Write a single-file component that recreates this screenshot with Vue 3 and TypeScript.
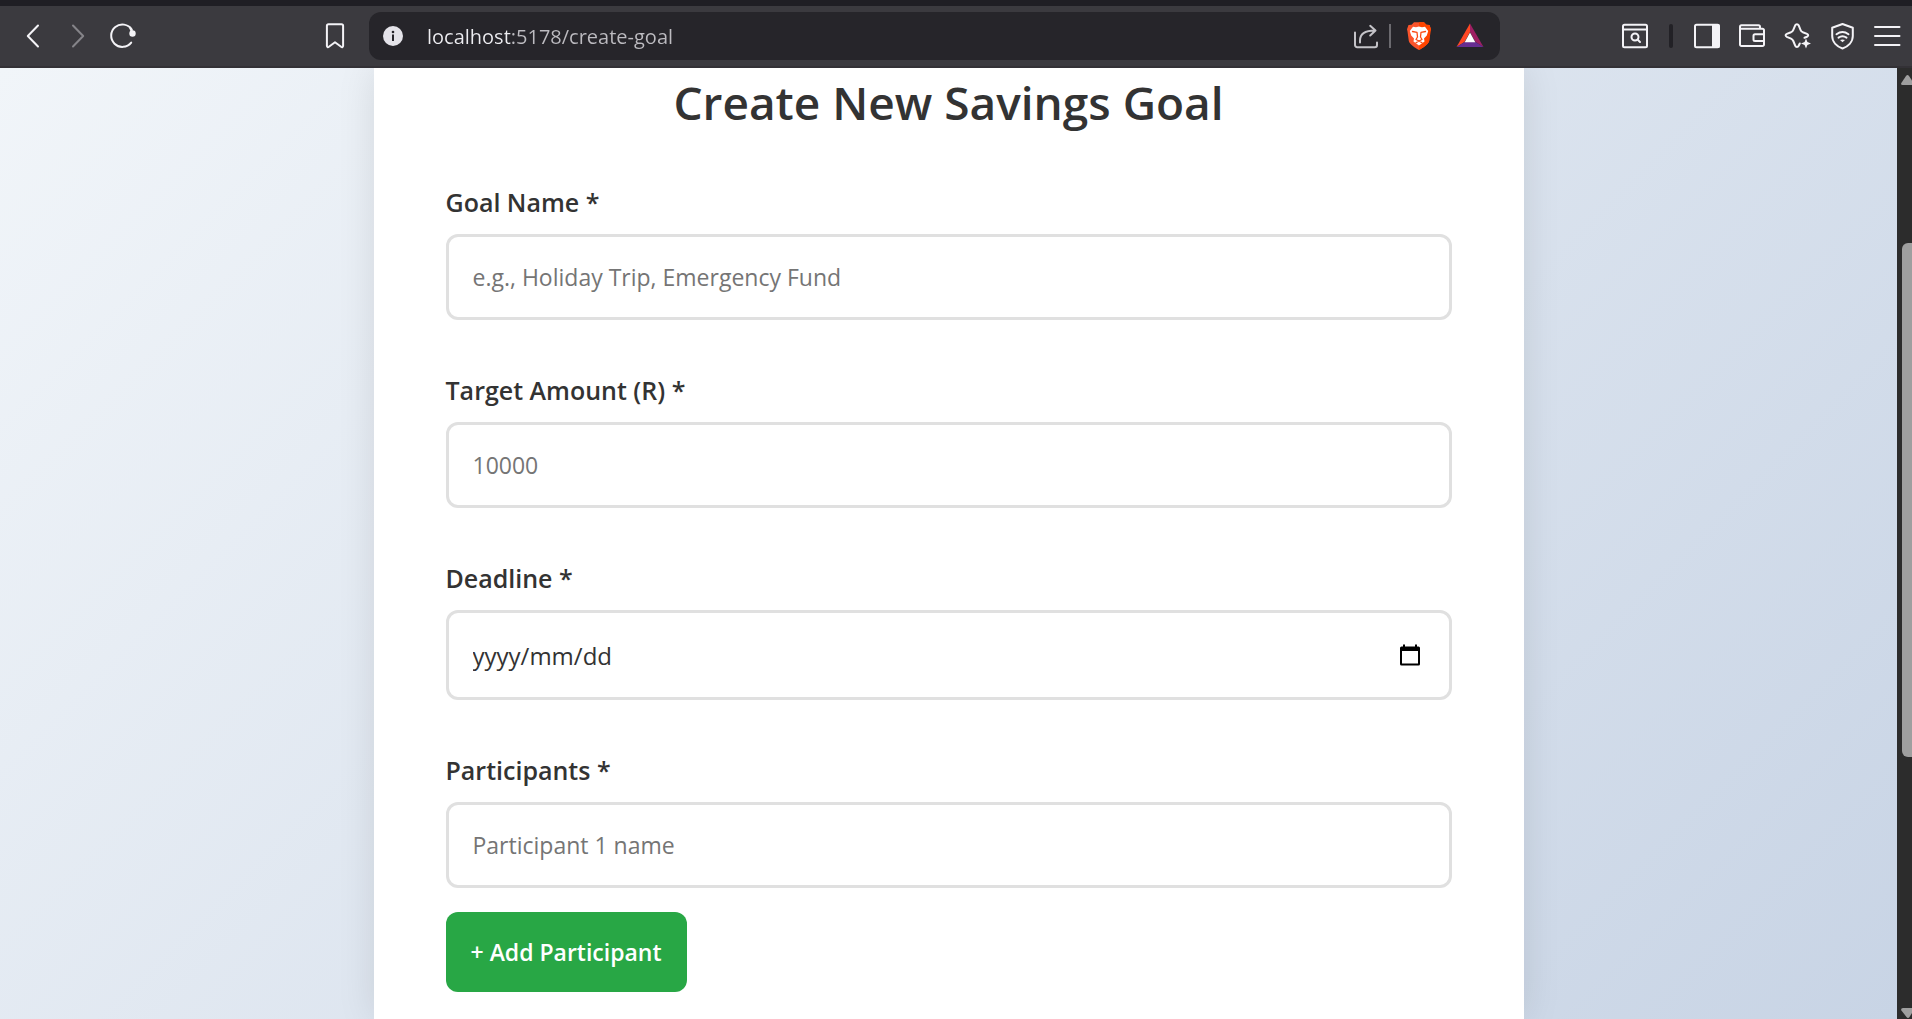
<script setup lang="ts">
import { ref } from 'vue'

const address = ref('localhost:5178/create-goal')
const goalName = ref('')
const targetAmount = ref('')
const deadline = ref('')
const participants = ref<string[]>([''])

function addParticipant(): void {
  participants.value.push('')
}
</script>

<template>
  <div class="browser">
    <header class="toolbar">
      <nav class="group" aria-label="Navigation">
        <button class="tool" type="button" aria-label="Back">
          <svg viewBox="0 0 32 32"><path d="M21 5.500L10.800 16L21 26.500" /></svg>
        </button>
        <button class="tool dim" type="button" aria-label="Forward">
          <svg viewBox="0 0 32 32"><path d="M11 5.500L21.200 16L11 26.500" /></svg>
        </button>
        <button class="tool" type="button" aria-label="Reload">
          <svg viewBox="0 0 32 32">
            <path d="M24.200 22.600A11.200 11.200 0 1 1 24.800 9.600" />
            <circle class="solid" cx="25.500" cy="13.500" r="3.200" />
            <path d="M23 7.500L25.500 13" />
          </svg>
        </button>
      </nav>
      <button class="tool bookmark" type="button" aria-label="Bookmark">
        <svg viewBox="0 0 32 32">
          <path d="M9.500 4.200h13a1.600 1.600 0 0 1 1.600 1.600v20c0 1.300-1 1.700-2 1l-6.100-4.500l-6.100 4.500c-1 .700-2 .300-2-1v-20a1.600 1.600 0 0 1 1.600-1.600z" />
        </svg>
      </button>
      <div class="address">
        <svg class="info" viewBox="0 0 32 32" aria-hidden="true">
          <circle cx="16" cy="16" r="10" fill="#e4e3e9" />
          <circle cx="16" cy="12" r="1.300" fill="#26252a" />
          <rect x="15" y="14.500" width="2" height="6.500" fill="#26252a" />
        </svg>
        <input v-model="address" class="url" type="text" aria-label="Address" />
        <button class="tool share" type="button" aria-label="Share">
          <svg viewBox="0 0 32 32">
            <path d="M5 12.500V25a2.200 2.200 0 0 0 2.200 2.200H24.800a2.200 2.200 0 0 0 2.200-2.200V22.500" />
            <path d="M10 22.500V20.500C10 14 14.500 10.500 25 10.500M20.200 5.800L25.500 10.500L20.200 15.500" />
          </svg>
        </button>
        <span class="rule light"></span>
        <button class="tool brave" type="button" aria-label="Brave Shields">
          <svg class="art" viewBox="0 0 32 32">
            <path fill="#fb542b" d="M11 2.200H21L23.400 4.800L26.500 5L28 9.300L27 11.500L26.200 21C25.500 24.500 19.500 28 16 30C12.500 28 6.500 24.500 5.800 21L4.500 11.500L4 9.300L5.500 5L8.600 4.800Z" />
            <path fill="#ff4500" d="M16 2.200H21L23.400 4.800L26.500 5L28 9.300L26.200 21C25.500 24.500 19.500 28 16 30Z" />
            <path fill="#fff" d="M10 6.800L13 7.200L16 6.500L19 7.200L22 6.800L25.200 11L23.800 15.500L21 18.500L21.500 21.500L16 25.500L10.500 21.500L11 18.500L8.200 15.500L6.800 11Z" />
            <path fill="none" stroke="#fb4a14" stroke-width="1.300" d="M9.500 11.500L14 12.300L14.500 17L13 19.500L16 21L19 19.500L17.500 17L18 12.300L22.500 11.500M13 22.800L16 21L19 22.800" />
          </svg>
        </button>
        <button class="tool rewards" type="button" aria-label="Brave Rewards">
          <svg class="art" viewBox="0 0 32 32">
            <path fill="#ff4724" d="M16 3.500V12L10.500 22L2.500 27Z" />
            <path fill="#9e1f63" d="M16 3.500V12L21.500 22L29.500 27Z" />
            <path fill="#662d91" d="M2.500 27L10.500 22H21.500L29.500 27Z" />
            <path fill="#fff" d="M16 12.500L21.300 22.300H10.700Z" />
          </svg>
        </button>
      </div>
      <div class="group end">
        <button class="tool" type="button" aria-label="Search tabs">
          <svg viewBox="0 0 32 32">
            <rect x="4" y="4.800" width="24" height="22.400" rx="1.500" />
            <path d="M4 9.500H28" />
            <circle cx="16" cy="17" r="3.500" />
            <path d="M18.500 19.500L21 22" />
          </svg>
        </button>
        <span class="rule dark"></span>
        <button class="tool" type="button" aria-label="Sidebar">
          <svg viewBox="0 0 32 32">
            <rect x="4" y="4.800" width="24" height="22.400" rx="1.500" />
            <rect class="solid" x="21" y="4.500" width="7.500" height="23" />
          </svg>
        </button>
        <button class="tool" type="button" aria-label="Wallet">
          <svg viewBox="0 0 32 32">
            <path d="M24 8.500V6.800a1.500 1.500 0 0 0-1.500-1.500H5.500A1.500 1.500 0 0 0 4 6.800V24.600A1.500 1.500 0 0 0 5.500 26.100H26.500A1.500 1.500 0 0 0 28 24.600V10.300A1.500 1.500 0 0 0 26.500 8.800H4.500" />
            <path d="M28 14.300H19A1.500 1.500 0 0 0 17.500 15.800V19.500A1.500 1.500 0 0 0 19 21H28" />
          </svg>
        </button>
        <button class="tool" type="button" aria-label="Leo AI">
          <svg viewBox="0 0 32 32">
            <path d="M18.800 23.500L17.700 25.800C16.900 27.300 14.900 27.300 14.300 25.800L12.300 21Q11.600 19.300 10 18.600L5.800 16.800C4.200 16 4.200 14.600 5.800 13.900L10 12.200Q11.600 11.500 12.300 9.800L14.300 5.200C14.900 3.800 16.900 3.800 17.600 5.200L19.500 9.800Q20.200 11.500 21.800 12.200L26 13.900C27.600 14.600 27.600 16 26 16.800L23.500 17.800" />
            <path class="solid" d="M25 18.500L26.400 22.100L30 23.500L26.400 24.900L25 28.500L23.600 24.900L20 23.500L23.600 22.100Z" />
          </svg>
        </button>
        <button class="tool" type="button" aria-label="VPN">
          <svg viewBox="0 0 32 32">
            <path d="M16.500 4L26.800 7.800V16C26.800 22 22 26.500 16.500 28.500C11 26.500 6.200 22 6.200 16V7.800Z" />
            <path d="M10.500 14.200Q16.500 10 22.500 14.200M12.500 17.700Q16.500 15 20.500 17.700" />
            <path class="solid" d="M14 20Q16.500 18.800 19 20L16.500 22.300Z" />
          </svg>
        </button>
        <button class="tool" type="button" aria-label="Menu">
          <svg viewBox="0 0 32 32"><path d="M4 7H28.500M4 16H28.500M4 25H28.500" /></svg>
        </button>
      </div>
    </header>

    <div class="viewport">
      <main class="page">
        <form class="card" @submit.prevent>
          <h1>Create New Savings Goal</h1>

          <div class="field">
            <label for="goal-name">Goal Name *</label>
            <input id="goal-name" v-model="goalName" class="control" type="text" placeholder="e.g., Holiday Trip, Emergency Fund" />
          </div>

          <div class="field">
            <label for="target-amount">Target Amount (R) *</label>
            <input id="target-amount" v-model="targetAmount" class="control" type="number" placeholder="10000" />
          </div>

          <div class="field">
            <label for="deadline">Deadline *</label>
            <div class="control date">
              <input id="deadline" v-model="deadline" type="text" placeholder="yyyy/mm/dd" />
              <button class="picker" type="button" aria-label="Show date picker">
                <svg viewBox="0 0 24 24">
                  <path fill="#000" fill-rule="evenodd" d="M5 1.500H7V3.500H17V1.500H19V3.500H20.500A1.500 1.500 0 0 1 22 5V21A1.500 1.500 0 0 1 20.500 22.500H3.500A1.500 1.500 0 0 1 2 21V5A1.500 1.500 0 0 1 3.500 3.500H5ZM4 8V20.500H20V8Z" />
                </svg>
              </button>
            </div>
          </div>

          <div class="field">
            <label for="participant-1">Participants *</label>
            <input
              v-for="(_, i) in participants"
              :id="`participant-${i + 1}`"
              :key="i"
              v-model="participants[i]"
              class="control"
              type="text"
              :placeholder="`Participant ${i + 1} name`"
            />
            <button class="add" type="button" @click="addParticipant">+ Add Participant</button>
          </div>
        </form>
      </main>
      <div class="scrollbar" aria-hidden="true">
        <svg viewBox="0 0 15 20"><path d="M4 15.500L9 8Q10.500 6 12 8L17 15.500Q17 17 15 17H5.500Q4 17 4 15.500Z" /></svg>
        <div class="track"><div class="thumb"></div></div>
        <svg viewBox="0 0 15 20"><path d="M4 11Q4 9 6 9H16Q17 9 17 11L12.500 18Q11 20 9.500 18Z" /></svg>
      </div>
    </div>
  </div>
</template>

<style>
body {
  margin: 0;
  overflow: hidden;
}
</style>

<style scoped>
* {
  box-sizing: border-box;
}

.browser {
  display: flex;
  flex-direction: column;
  height: 100vh;
  font-family: "Segoe UI", "Open Sans", "Noto Sans", sans-serif;
  color: #333;
}

button,
input {
  font-family: inherit;
  margin: 0;
}

.toolbar {
  display: flex;
  flex: none;
  align-items: center;
  padding: 6px 9px 6px 17px;
  border-top: 6px solid #1f1e24;
  border-bottom: 2px solid #333136;
  background: #3b3a3f;
}

.group {
  display: flex;
  align-items: center;
  gap: 13px;
}

.group.end {
  margin-left: 119px;
}

.tool {
  flex: none;
  width: 32px;
  height: 32px;
  padding: 0;
  border: 0;
  background: none;
  color: #f4f3f7;
}

.tool svg {
  display: block;
  width: 32px;
  height: 32px;
  fill: none;
  stroke: currentColor;
  stroke-width: 2;
  stroke-linecap: round;
  stroke-linejoin: round;
}

.tool .solid {
  fill: currentColor;
  stroke: none;
}

.tool svg.art {
  stroke: none;
}

.tool.dim {
  color: #858489;
}

.bookmark {
  margin: 0 18px 0 180px;
}

.address {
  display: flex;
  flex: 1;
  align-items: center;
  min-width: 0;
  height: 48px;
  padding: 0 14px 0 8px;
  border-radius: 12px;
  background: #26252a;
}

.info {
  flex: none;
  width: 32px;
  height: 32px;
}

.url {
  flex: 1;
  min-width: 0;
  height: 32px;
  margin-left: 18px;
  padding: 0;
  border: 0;
  color: #c4c3c8;
  font-size: 20px;
  background: linear-gradient(90deg, #ededf1 84px, #bdbcc1 84px);
  background-clip: text;
  -webkit-text-fill-color: transparent;
}

.tool.share {
  color: #c4c3c8;
}

.rule {
  flex: none;
  height: 24px;
}

.rule.light {
  width: 2px;
  margin: 0 12px 0 7px;
  background: #6b6a6f;
}

.rule.dark {
  width: 4px;
  margin: 0 5px;
  border-radius: 2px;
  background: #222126;
}

.brave {
  margin-right: 19px;
}

.viewport {
  display: flex;
  flex: 1;
  min-height: 0;
}

.page {
  display: flex;
  flex: 1;
  justify-content: center;
  min-width: 0;
  overflow: hidden;
  background: linear-gradient(135deg, #f1f5f9, #c8d4e5);
}

.card {
  flex: 0 1 1150px;
  min-width: 0;
  min-height: 100%;
  padding: 4px 72px 27px;
  background: #fff;
  box-shadow: 0 0 36px rgba(0, 0, 0, 0.1);
}

h1 {
  margin: 0 0 56px;
  font-size: 46px;
  line-height: 60px;
  font-weight: 600;
  text-align: center;
}

.field + .field {
  margin-top: 56px;
}

label {
  display: block;
  margin-bottom: 18px;
  font-size: 25px;
  line-height: 28px;
  font-weight: 600;
}

.control {
  display: block;
  width: 100%;
  height: 86px;
  padding: 0 24px;
  border: 3px solid #e0e0e0;
  border-radius: 12px;
  background: #fff;
  color: #333;
  font-size: 23px;
}

.control::placeholder {
  color: #757575;
}

.control + .control {
  margin-top: 24px;
}

.control[type="number"] {
  appearance: textfield;
}

.control.date {
  display: flex;
  align-items: center;
  height: 90px;
}

.date input {
  flex: 1;
  min-width: 0;
  padding: 0;
  border: 0;
  background: none;
  color: #333;
  font-size: 24px;
}

.date input::placeholder {
  color: #333;
}

.picker {
  width: 27px;
  height: 24px;
  padding: 0;
  border: 0;
  background: none;
}

.picker svg {
  display: block;
  width: 24px;
  height: 24px;
}

.add {
  display: block;
  height: 80px;
  margin-top: 24px;
  padding: 0 25px;
  border: 0;
  border-radius: 12px;
  background: #28a745;
  color: #fff;
  font-size: 23px;
  font-weight: 600;
}

.scrollbar {
  display: flex;
  flex: none;
  flex-direction: column;
  width: 15px;
  background: #2c2c2c;
}

.scrollbar svg {
  flex: none;
  width: 15px;
  height: 20px;
  fill: #9f9f9f;
}

.track {
  display: flex;
  flex: 1;
  justify-content: flex-end;
  padding: 155px 0 0;
}

.thumb {
  width: 10px;
  height: 68%;
  border-radius: 6px 0 0 6px;
  background: #9f9f9f;
}
</style>
